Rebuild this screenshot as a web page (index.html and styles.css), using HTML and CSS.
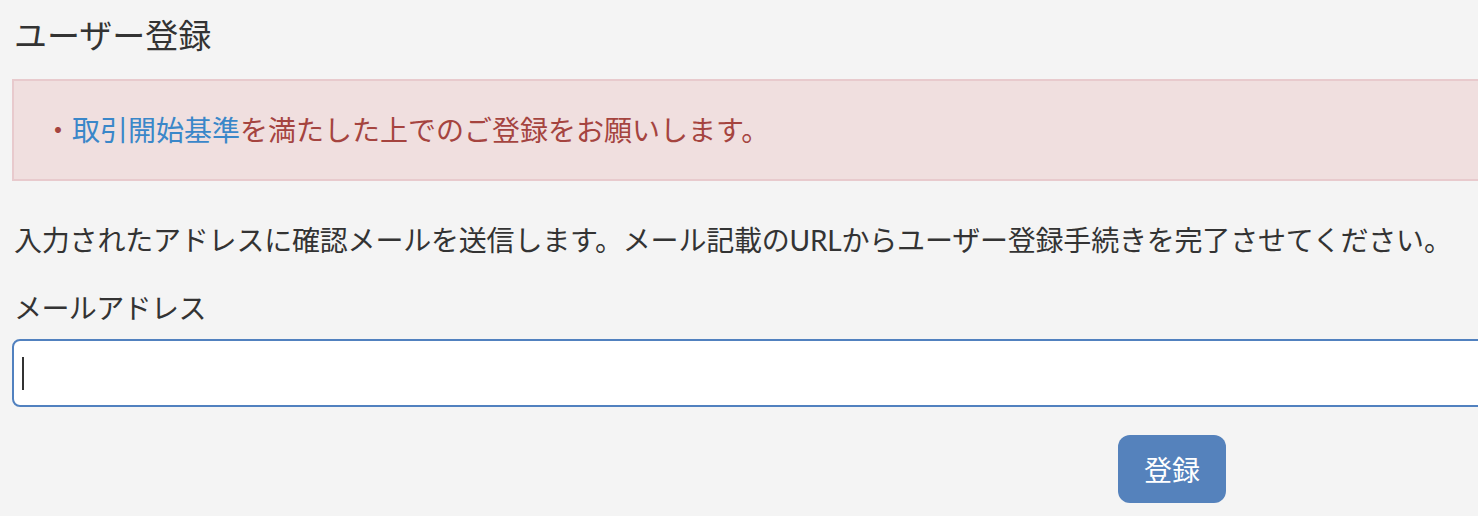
FILE: index.html
```html
<!DOCTYPE html>
<html lang="ja">
<head>
<meta charset="utf-8">
<title>ユーザー登録</title>
<link rel="stylesheet" href="styles.css">
</head>
<body>
<main class="page">
  <h1 class="title">ユーザー登録</h1>
  <div class="alert">
    <p class="alert-line">・<a class="alert-link" href="#">取引開始基準</a>を満たした上でのご登録をお願いします。</p>
  </div>
  <p class="lead">入力されたアドレスに確認メールを送信します。メール記載のURLからユーザー登録手続きを完了させてください。</p>
  <form class="form">
    <label class="label" for="email">メールアドレス</label>
    <div class="field">
      <input class="input" id="email" type="email">
    </div>
    <div class="actions">
      <button class="btn" type="button">登録</button>
    </div>
  </form>
</main>
</body>
</html>
```
FILE: styles.css
```css
html, body {
  margin: 0;
  padding: 0;
  overflow: hidden;
  background: #f4f4f4;
}
body {
  font-family: Lato, "Noto Sans CJK JP", sans-serif;
  color: #333333;
  font-size: 28px;
}
.page {
  width: 2320px;
  padding: 10px 0 0 12px;
}
.title {
  font-size: 33px;
  font-weight: normal;
  line-height: 50px;
  margin: 0 0 19px 2px;
  color: #333333;
}
.alert {
  background: #f0dfdf;
  border: 2px solid #e8cacd;
  padding: 28px 30px;
}
.alert-line {
  margin: 0;
  line-height: 42px;
  color: #a5443f;
}
.alert-link {
  color: #3a87c9;
  text-decoration: none;
}
.lead {
  margin: 38px 0 0 2px;
  line-height: 42px;
  letter-spacing: -0.2px;
}
.form {
  display: flex;
  flex-direction: column;
}
.label {
  margin: 26px 0 0 2px;
  line-height: 42px;
  letter-spacing: -0.6px;
}
.field {
  position: relative;
  margin-top: 10px;
}
.field::after {
  content: "";
  position: absolute;
  left: 10px;
  top: 18px;
  width: 2px;
  height: 33px;
  background: #333333;
}
.input {
  display: block;
  box-sizing: border-box;
  width: 100%;
  height: 68px;
  border: 2px solid #5181bf;
  border-radius: 8px;
  background: #ffffff;
  outline: none;
  font: inherit;
  padding: 0 12px;
}
.actions {
  display: flex;
  justify-content: center;
  margin-top: 28px;
}
.btn {
  width: 108px;
  height: 68px;
  border: none;
  border-radius: 12px;
  background: #5582bc;
  color: #ffffff;
  font: inherit;
  font-size: 28px;
  padding: 0;
}
```
